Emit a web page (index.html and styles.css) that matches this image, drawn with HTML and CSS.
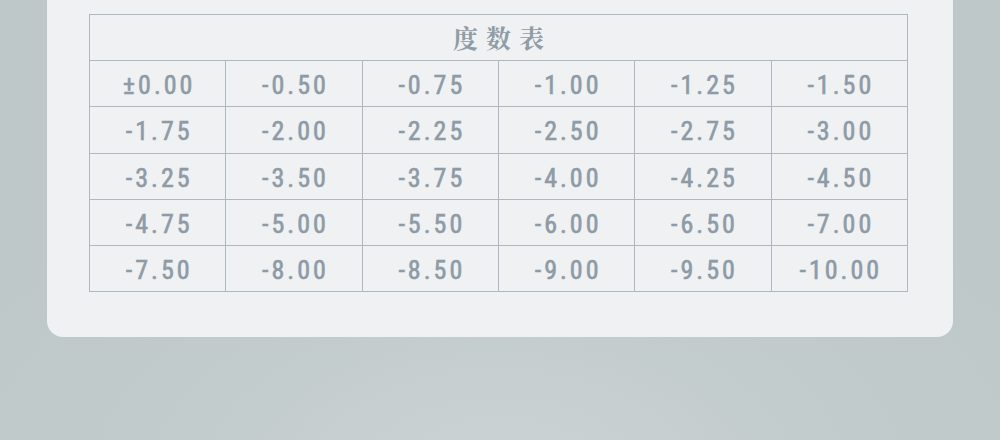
FILE: index.html
```html
<!DOCTYPE html>
<html lang="zh">
<head>
<meta charset="utf-8">
<link rel="stylesheet" href="styles.css">
</head>
<body>
<div class="page">
  <div class="card">
    <table class="chart">
      <thead>
        <tr><th colspan="6" class="title">度数表</th></tr>
      </thead>
      <tbody>
        <tr><td>±0.00</td><td>-0.50</td><td>-0.75</td><td>-1.00</td><td>-1.25</td><td>-1.50</td></tr>
        <tr><td>-1.75</td><td>-2.00</td><td>-2.25</td><td>-2.50</td><td>-2.75</td><td>-3.00</td></tr>
        <tr><td>-3.25</td><td>-3.50</td><td>-3.75</td><td>-4.00</td><td>-4.25</td><td>-4.50</td></tr>
        <tr><td>-4.75</td><td>-5.00</td><td>-5.50</td><td>-6.00</td><td>-6.50</td><td>-7.00</td></tr>
        <tr><td>-7.50</td><td>-8.00</td><td>-8.50</td><td>-9.00</td><td>-9.50</td><td>-10.00</td></tr>
      </tbody>
    </table>
  </div>
</div>
</body>
</html>
```

FILE: styles.css
```css
html, body {
  margin: 0;
  padding: 0;
}
body {
  width: 1000px;
  height: 440px;
  overflow: hidden;
  background: radial-gradient(ellipse 60% 80% at 50% 110%, #ccd3d5 0%, #c3cccd 50%, #bfc8c9 100%);
  font-family: "Roboto Condensed", Roboto, "Noto Sans CJK SC", sans-serif;
}
.page {
  padding-left: 47px;
}
.card {
  width: 906px;
  box-sizing: border-box;
  background: #eff1f3;
  border-radius: 0 0 16px 16px;
  padding: 14px 45px 45px 42px;
}
.chart {
  width: 819px;
  border-collapse: collapse;
  table-layout: fixed;
  color: #8e9ba6;
}
.chart th,
.chart td {
  border: 1px solid #adb8c0;
  height: 45.2px;
  padding: 0;
  text-align: center;
  vertical-align: middle;
}
.chart .title {
  font-family: "Noto Serif CJK SC", "Noto Sans CJK SC", serif;
  font-weight: 700;
  font-size: 25px;
  letter-spacing: 8px;
  padding-left: 8px;
  line-height: 1;
  color: #909ca6;
}
.chart td {
  font-size: 26px;
  font-weight: 400;
  -webkit-text-stroke: 0.6px #8e9ba6;
  letter-spacing: 3px;
  line-height: 1;
  height: 42.2px;
  padding: 3px 0 0 3px;
}
```
